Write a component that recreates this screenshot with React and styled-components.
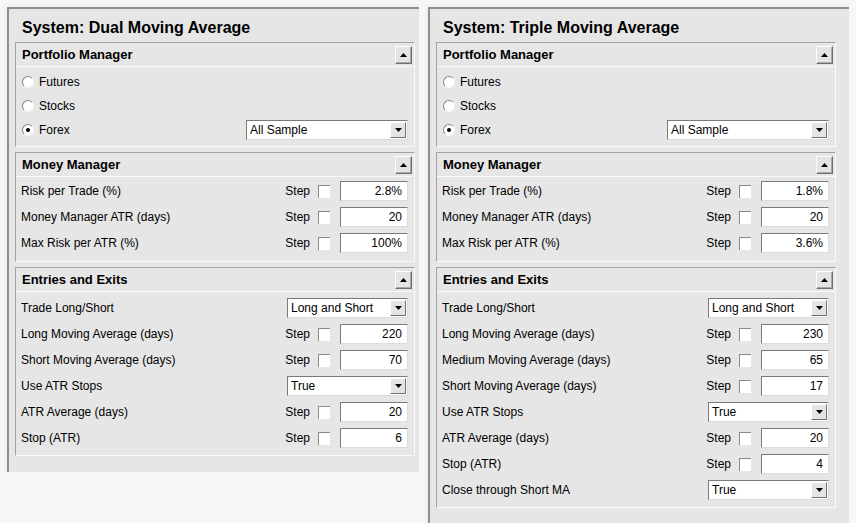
import React from 'react'
import styled, { createGlobalStyle } from 'styled-components'

const GlobalStyle = createGlobalStyle`
  body {
    margin: 0;
    background: #f7f7f7;
    font-family: "Liberation Sans", Arial, sans-serif;
    color: #000;
  }
`

const Page = styled.div`
  display: flex;
  align-items: flex-start;
  gap: 6px;
  padding: 4px;
`

const Panel = styled.div`
  width: ${p => p.$width}px;
  box-sizing: border-box;
  background: #e6e6e6;
  border-top: 3px solid #f0f0f0;
  border-left: 3px solid #f0f0f0;
  box-shadow: inset 2px 2px 0 #8f8f8f;
  padding: 0 0 11px 8px;
`

const Title = styled.div`
  font-size: 16px;
  font-weight: bold;
  line-height: 20px;
  padding: 11px 0 4px 7px;
`

const Section = styled.div`
  width: 400px;
  box-sizing: border-box;
  border-top: 1px solid #a3a3a3;
  border-left: 1px solid #a3a3a3;
  border-right: 1px solid #fafafa;
  border-bottom: 1px solid #fafafa;
  margin-bottom: 5px;
`

const Header = styled.div`
  height: 23px;
  display: flex;
  align-items: center;
  justify-content: space-between;
  padding: 0 2px 0 6px;
  border-bottom: 1px solid #fafafa;
  font-size: 13px;
  font-weight: bold;
`

const Collapse = styled.div`
  width: 17px;
  height: 18px;
  box-sizing: border-box;
  background: #e4e4e4;
  border-top: 1px solid #fff;
  border-left: 1px solid #fff;
  border-right: 1px solid #707070;
  border-bottom: 1px solid #707070;
  box-shadow: inset -1px -1px 0 #a8a8a8;
  display: flex;
  align-items: center;
  justify-content: center;
`

const Body = styled.div`
  padding: ${p => p.$top}px 6px ${p => p.$bottom}px 5px;
`

const Row = styled.div`
  height: ${p => p.$h || 26}px;
  display: flex;
  align-items: center;
  font-size: 12px;
`

const Label = styled.span`
  flex: 1;
`

const RadioLabel = styled.label`
  display: flex;
  align-items: center;
  gap: 5px;
  flex: 1;
  padding-left: 1px;
`

const RadioDot = styled.span`
  width: 12px;
  height: 12px;
  box-sizing: border-box;
  border-radius: 50%;
  background: #fff;
  border: 1px solid;
  border-color: #8a8a8a #f4f4f4 #f4f4f4 #8a8a8a;
  display: flex;
  align-items: center;
  justify-content: center;
  &::after {
    content: '';
    width: 4px;
    height: 4px;
    border-radius: 50%;
    background: ${p => (p.$on ? '#000' : 'transparent')};
  }
`

const StepText = styled.span`
  margin-right: 8px;
`

const Check = styled.span`
  width: 12px;
  height: 13px;
  box-sizing: border-box;
  background: #fff;
  border-top: 1px solid #8a8a8a;
  border-left: 1px solid #8a8a8a;
  margin-right: 10px;
`

const Field = styled.div`
  width: 68px;
  height: 20px;
  box-sizing: border-box;
  background: #fff;
  border-top: 1px solid #7a7a7a;
  border-left: 1px solid #7a7a7a;
  border-right: 1px solid #dcdcdc;
  border-bottom: 1px solid #dcdcdc;
  text-align: right;
  padding: 0 5px;
  line-height: 18px;
  font-size: 12px;
`

const Select = styled.div`
  width: ${p => p.$width}px;
  height: 20px;
  box-sizing: border-box;
  background: #fff;
  border-top: 1px solid #7a7a7a;
  border-left: 1px solid #7a7a7a;
  border-right: 1px solid #dcdcdc;
  border-bottom: 1px solid #dcdcdc;
  display: flex;
  align-items: center;
  padding: 0 1px 0 3px;
  font-size: 12px;
`

const SelectText = styled.span`
  flex: 1;
`

const SelectButton = styled.span`
  width: 16px;
  height: 16px;
  box-sizing: border-box;
  background: #e4e4e4;
  border-top: 1px solid #fff;
  border-left: 1px solid #fff;
  border-right: 1px solid #707070;
  border-bottom: 1px solid #707070;
  display: flex;
  align-items: center;
  justify-content: center;
`

const Arrow = ({ up }) => (
  <svg width="7" height="4" viewBox="0 0 7 4">
    <polygon points={up ? '0,4 7,4 3.5,0' : '0,0 7,0 3.5,4'} fill="#000" />
  </svg>
)

const Dropdown = ({ width, value }) => (
  <Select $width={width}>
    <SelectText>{value}</SelectText>
    <SelectButton><Arrow /></SelectButton>
  </Select>
)

const SectionBox = ({ title, top, bottom, children }) => (
  <Section>
    <Header>
      {title}
      <Collapse><Arrow up /></Collapse>
    </Header>
    <Body $top={top} $bottom={bottom}>{children}</Body>
  </Section>
)

const StepRow = ({ label, value }) => (
  <Row>
    <Label>{label}</Label>
    <StepText>Step</StepText>
    <Check />
    <Field>{value}</Field>
  </Row>
)

const SelectRow = ({ label, value }) => (
  <Row>
    <Label>{label}</Label>
    <Dropdown width={121} value={value} />
  </Row>
)

const systems = [
  {
    name: 'System: Dual Moving Average',
    width: 415,
    money: ['2.8%', '20', '100%'],
    entries: [
      { label: 'Trade Long/Short', select: 'Long and Short' },
      { label: 'Long Moving Average (days)', value: '220' },
      { label: 'Short Moving Average (days)', value: '70' },
      { label: 'Use ATR Stops', select: 'True' },
      { label: 'ATR Average (days)', value: '20' },
      { label: 'Stop (ATR)', value: '6' },
    ],
  },
  {
    name: 'System: Triple Moving Average',
    width: 424,
    money: ['1.8%', '20', '3.6%'],
    entries: [
      { label: 'Trade Long/Short', select: 'Long and Short' },
      { label: 'Long Moving Average (days)', value: '230' },
      { label: 'Medium Moving Average (days)', value: '65' },
      { label: 'Short Moving Average (days)', value: '17' },
      { label: 'Use ATR Stops', select: 'True' },
      { label: 'ATR Average (days)', value: '20' },
      { label: 'Stop (ATR)', value: '4' },
      { label: 'Close through Short MA', select: 'True' },
    ],
  },
]

const moneyLabels = ['Risk per Trade (%)', 'Money Manager ATR (days)', 'Max Risk per ATR (%)']

const SystemPanel = ({ system }) => (
  <Panel $width={system.width}>
    <Title>{system.name}</Title>
    <SectionBox title="Portfolio Manager" top={3} bottom={4}>
      <Row $h={24}>
        <RadioLabel><RadioDot />Futures</RadioLabel>
      </Row>
      <Row $h={24}>
        <RadioLabel><RadioDot />Stocks</RadioLabel>
      </Row>
      <Row $h={24}>
        <RadioLabel><RadioDot $on />Forex</RadioLabel>
        <Dropdown width={162} value="All Sample" />
      </Row>
    </SectionBox>
    <SectionBox title="Money Manager" top={1} bottom={5}>
      {system.money.map((v, i) => (
        <StepRow key={i} label={moneyLabels[i]} value={v} />
      ))}
    </SectionBox>
    <SectionBox title="Entries and Exits" top={3} bottom={4}>
      {system.entries.map((e, i) =>
        e.select ? (
          <SelectRow key={i} label={e.label} value={e.select} />
        ) : (
          <StepRow key={i} label={e.label} value={e.value} />
        )
      )}
    </SectionBox>
  </Panel>
)

export default function App() {
  return (
    <>
      <GlobalStyle />
      <Page>
        {systems.map(s => (
          <SystemPanel key={s.name} system={s} />
        ))}
      </Page>
    </>
  )
}
